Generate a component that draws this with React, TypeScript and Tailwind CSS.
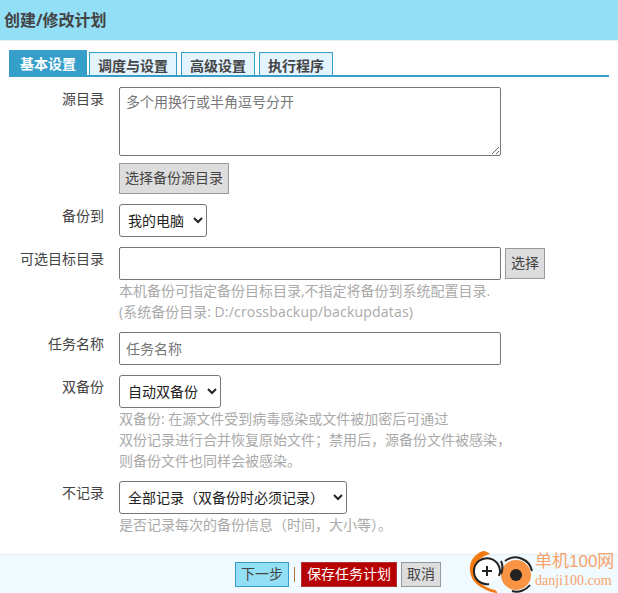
const FONT = "font-['Open_Sans','Noto_Sans_CJK_SC',sans-serif]";

const tabs = ['调度与设置', '高级设置', '执行程序'];

function Row({ label, labelTop = 'pt-[2px]', children, className = '' }: { label: string; labelTop?: string; children: React.ReactNode; className?: string }) {
  return (
    <div className={`flex ${className}`}>
      <label className={`w-[104px] shrink-0 text-right text-[14px] leading-[20px] text-[#444] ${labelTop}`}>{label}</label>
      <div className="ml-[15px] min-w-0 flex-1">{children}</div>
    </div>
  );
}

function Help({ children }: { children: React.ReactNode }) {
  return <div className="text-[14px] leading-[21px] text-[#aaa]">{children}</div>;
}

function Logo() {
  return (
    <svg width="66" height="46" viewBox="0 0 66 46" className="shrink-0">
      <path d="M15 4 C6 7 1 15 2 24 C3 35 13 43 28 46 C30 46 29 44 27 43 C16 41 8 34 7 25 C6 17 11 10 22 7 C20 5 17 4 15 4 Z" fill="#f47a12" />
      <path d="M31 29 A13 13 0 1 0 21 37" fill="#fff" stroke="#222" strokeWidth="2" />
      <path d="M14 24 H24 M19 19 V29" stroke="#222" strokeWidth="2" />
      <circle cx="48" cy="28" r="15" fill="#f99445" />
      <path d="M37 14 A17 17 0 0 1 64 24 M62 38 A17 17 0 0 1 44 44" fill="none" stroke="#222" strokeWidth="2" />
      <path d="M33 14 C35 18 35 22 33 27" fill="none" stroke="#222" strokeWidth="2" />
      <circle cx="48" cy="28" r="6" fill="#222" />
    </svg>
  );
}

export default function App() {
  return (
    <div className={`${FONT} relative h-[593px] w-[618px] overflow-hidden bg-white`}>
      <div className="flex h-[41px] items-center border-b border-[#e4f1f6] bg-[#93dff6] pb-[1px] pl-[4px]">
        <h1 className="text-[16px] font-bold text-[#444]">创建/修改计划</h1>
      </div>

      <div className="ml-[9px] mr-[9px] mt-[10px] flex h-[26px] items-end gap-[2px] border-b-2 border-[#359fc9]">
        <div className="flex h-[25px] w-[78px] items-center justify-center bg-[#359fc9] pt-[2px] text-[14px] font-bold text-white">基本设置</div>
        {tabs.map((t, i) => (
          <div key={t} className={`flex h-[23px] items-center justify-center border border-b-0 border-[#359fc9] bg-[#e3f3ff] pt-[2px] text-[14px] font-bold text-[#444] ${i === 0 ? 'w-[88px]' : 'ml-[2px] w-[74px]'}`}>{t}</div>
        ))}
      </div>

      <div className="mt-[10px]">
        <Row label="源目录">
          <textarea readOnly placeholder="多个用换行或半角逗号分开" className="block h-[69px] w-[382px] resize-y rounded-[2px] border border-[#767676] px-[6px] py-[4px] text-[14px] leading-[20px] text-[#444] placeholder:text-[#777] focus:outline-none" />
          <button className="mt-[7px] block h-[31px] w-[110px] border border-[#999] bg-[#ddd] pb-[2px] text-[14px] text-[#444]">选择备份源目录</button>
        </Row>

        <Row label="备份到" className="mt-[10px]">
          <select className="block h-[33px] w-[88px] rounded-[3px] border border-[#767676] bg-white pb-[1px] pl-[4px] text-[14px] text-[#222]">
            <option>我的电脑</option>
          </select>
        </Row>

        <Row label="可选目标目录" className="mt-[10px]">
          <div className="flex items-center">
            <input readOnly className="block h-[33px] w-[382px] rounded-[2px] border border-[#767676] px-[6px] text-[14px]" />
            <button className="ml-[4px] h-[31px] w-[40px] border border-[#999] bg-[#ddd] pb-[2px] text-[14px] text-[#444]">选择</button>
          </div>
          <Help>
            <div>本机备份可指定备份目标目录,不指定将备份到系统配置目录.</div>
            <div>(系统备份目录: <span className="tracking-[0.2px]">D:/crossbackup/backupdatas)</span></div>
          </Help>
        </Row>

        <Row label="任务名称" className="mt-[10px]">
          <input readOnly placeholder="任务名称" className="block h-[33px] w-[382px] rounded-[2px] border border-[#767676] px-[6px] pb-[1px] text-[14px] placeholder:text-[#777] focus:outline-none" />
        </Row>

        <Row label="双备份" className="mt-[10px]">
          <select className="block h-[33px] w-[102px] rounded-[3px] border border-[#767676] bg-white pb-[1px] pl-[4px] text-[14px] text-[#222]">
            <option>自动双备份</option>
          </select>
          <Help>
            <div>双备份: 在源文件受到病毒感染或文件被加密后可通过</div>
            <div>双份记录进行合并恢复原始文件；禁用后，源备份文件被感染，</div>
            <div>则备份文件也同样会被感染。</div>
          </Help>
        </Row>

        <Row label="不记录" className="mt-[10px]">
          <select className="block h-[33px] w-[228px] rounded-[3px] border border-[#767676] bg-white pb-[1px] pl-[4px] text-[14px] text-[#222]">
            <option>全部记录（双备份时必须记录）</option>
          </select>
          <Help>是否记录每次的备份信息（时间，大小等）。</Help>
        </Row>
      </div>

      <div className="absolute bottom-0 left-0 right-0 flex h-[39px] items-center border-t border-[#e4eef2] bg-[#f0faff] pl-[235px]">
        <button className="h-[25px] w-[54px] border border-[#359fc9] bg-[#93dff6] pb-[1px] text-[14px] text-[#444]">下一步</button>
        <span className="ml-[5px] h-[15px] w-[1px] bg-[#b5752f]" />
        <button className="ml-[6px] h-[25px] w-[96px] border border-[#a33] bg-[#b70000] pb-[1px] text-[14px] text-white">保存任务计划</button>
        <button className="ml-[4px] h-[25px] w-[40px] border border-[#999] bg-[#ddd] pb-[1px] text-[14px] text-[#444]">取消</button>
      </div>

      <div className="absolute bottom-0 left-[468px] flex h-[46px] items-start">
        <Logo />
        <div className="ml-[1px] mt-[4px] flex flex-col items-start whitespace-nowrap">
          <span className="font-['Liberation_Sans','Noto_Sans_CJK_SC',sans-serif] text-[17px] leading-[22px] text-[#f9a26b]">单机100网</span>
          <span className="font-['Liberation_Serif',serif] text-[14px] leading-[16px] text-[#f9a26b]">danji100.com</span>
        </div>
      </div>
    </div>
  );
}
